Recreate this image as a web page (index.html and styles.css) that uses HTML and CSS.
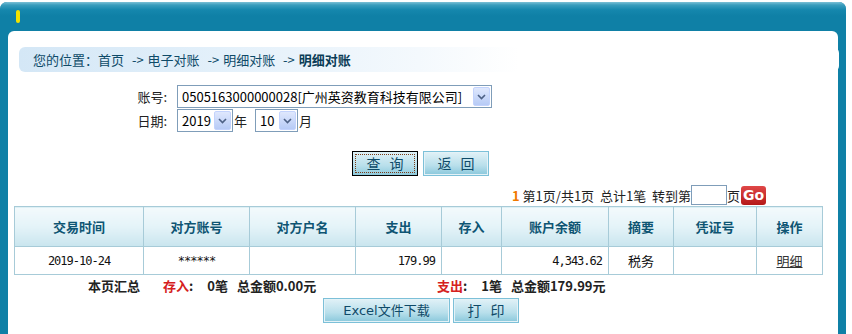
FILE: index.html
```html
<!DOCTYPE html>
<html lang="zh-CN">
<head>
  <meta charset="UTF-8" />
  <title>明细对账</title>
  <link rel="stylesheet" href="styles.css">
</head>
<body>
  <div class="frame">
    <div class="frame-head"><span class="mark"></span></div>
    <div class="panel">

      <div class="crumb">您的位置：首页 <span class="arr">-&gt;</span> 电子对账 <span class="arr">-&gt;</span> 明细对账 <span class="arr">-&gt;</span> <b>明细对账</b></div>

      <div class="form">
        <div class="row">
          <span class="label">账号:</span>
          <span class="combo combo-acct"><span class="val">0505163000000028[广州英资教育科技有限公司]</span><span class="drop"><svg width="9" height="6" viewBox="0 0 9 6"><path d="M1 1 L4.5 4.5 L8 1" fill="none" stroke="#4d6185" stroke-width="1.6"/></svg></span></span>
        </div>
        <div class="row">
          <span class="label">日期:</span>
          <span class="combo combo-year"><span class="val">2019</span><span class="drop"><svg width="9" height="6" viewBox="0 0 9 6"><path d="M1 1 L4.5 4.5 L8 1" fill="none" stroke="#4d6185" stroke-width="1.6"/></svg></span></span>
          <span class="unit">年</span>
          <span class="combo combo-month"><span class="val">10</span><span class="drop"><svg width="9" height="6" viewBox="0 0 9 6"><path d="M1 1 L4.5 4.5 L8 1" fill="none" stroke="#4d6185" stroke-width="1.6"/></svg></span></span>
          <span class="unit">月</span>
        </div>
      </div>

      <div class="actions">
        <button class="btn btn-focus"><span>查 询</span></button>
        <button class="btn">返 回</button>
      </div>

      <div class="pager"><span class="cur">1</span> 第1页/共1页  总计1笔  转到第<span class="goto"></span>页<span class="go">Go</span></div>

      <table class="grid">
        <thead>
          <tr>
            <th class="c1">交易时间</th>
            <th class="c2">对方账号</th>
            <th class="c3">对方户名</th>
            <th class="c4">支出</th>
            <th class="c5">存入</th>
            <th class="c6">账户余额</th>
            <th class="c7">摘要</th>
            <th class="c8">凭证号</th>
            <th class="c9">操作</th>
          </tr>
        </thead>
        <tbody>
          <tr>
            <td class="mid">2019-10-24</td>
            <td class="mid">******</td>
            <td></td>
            <td class="num">179.99</td>
            <td></td>
            <td class="num">4,343.62</td>
            <td class="mid cn">税务</td>
            <td></td>
            <td class="mid cn"><a href="#">明细</a></td>
          </tr>
        </tbody>
      </table>

      <div class="summary">
        <span class="sum-title">本页汇总</span>
        <span class="sum-in"><span class="tag">存入</span>:<span class="cnt">0笔</span>总金额0.00元</span>
        <span class="sum-out"><span class="tag">支出</span>:<span class="cnt">1笔</span>总金额179.99元</span>
      </div>

      <div class="actions actions-bottom">
        <button class="btn btn-excel">Excel文件下载</button>
        <button class="btn">打 印</button>
      </div>

    </div>
  </div>
</body>
</html>
```

FILE: styles.css
```css
body {
  margin: 0;
  padding: 0;
  background: #fff;
  font-family: "Noto Sans CJK SC", "DejaVu Sans", sans-serif;
  font-size: 13px;
  color: #000;
  overflow: hidden;
}
.frame {
  margin-top: 2px;
  width: 846px;
  height: 332px;
  background: #0f80a6;
  border-radius: 7px 7px 0 0;
  display: flex;
  flex-direction: column;
}
.frame-head {
  height: 29px;
  border-radius: 7px 7px 0 0;
  background: linear-gradient(#7cc0d6 0, #3a9dbd 3px, #1587ad 8px, #0f80a6 14px);
  padding: 8px 0 0 16px;
  box-sizing: border-box;
}
.mark {
  display: block;
  width: 4px;
  height: 13px;
  border-radius: 2px;
  background: #f2e200;
}
.panel {
  flex: 1;
  margin: 0 8px;
  background: #fff;
  border-radius: 6px 6px 0 0;
  padding-top: 16px;
}
.crumb {
  margin-left: 11px;
  width: 820px;
  height: 25px;
  line-height: 25px;
  padding-left: 14px;
  box-sizing: border-box;
  border-radius: 6px;
  background: linear-gradient(to right, #d4e7f6 0, #e3f0fa 200px, #f4f9fd 400px, #fff 500px);
  color: #0e4a68;
  font-size: 13px;
  white-space: nowrap;
}
.crumb .arr {
  color: #0e4a68;
  margin: 0 1px 0 5px;
}
.crumb b {
  color: #0b3d57;
}
.form {
  margin-top: 13px;
  display: flex;
  flex-direction: column;
  gap: 1px;
}
.row {
  display: flex;
  align-items: center;
  height: 23px;
}
.label {
  width: 169px;
  text-align: right;
  padding-right: 10px;
  box-sizing: border-box;
  color: #222;
}
.combo {
  display: flex;
  align-items: stretch;
  height: 23px;
  box-sizing: border-box;
  border: 1px solid #7f9db9;
  background: #fff;
  padding: 1px;
}
.combo .val {
  flex: 1;
  padding-left: 3px;
  line-height: 19px;
  color: #000;
  white-space: nowrap;
  overflow: hidden;
}
.combo .drop {
  width: 17px;
  display: flex;
  align-items: center;
  justify-content: center;
  border-radius: 2px;
  background: linear-gradient(#dfe8fd, #b7cbf6);
  border: 1px solid #c3d3fd;
  box-sizing: border-box;
}
.combo-acct { width: 315px; }
.combo-year { width: 56px; }
.combo-month { width: 43px; }
.unit {
  margin: 0 8px 0 1px;
  color: #222;
}
.actions {
  margin-top: 19px;
  display: flex;
  gap: 5px;
  padding-left: 344px;
}
.btn {
  width: 66px;
  height: 25px;
  box-sizing: border-box;
  border: 2px solid #e4f2f7;
  outline: 1px solid #7cc0d8;
  outline-offset: -1px;
  background: linear-gradient(#def0f6, #b8dfeb 60%, #8ecadd);
  color: #0e4a68;
  font-family: "Noto Sans CJK SC", sans-serif;
  font-size: 14px;
  line-height: 19px;
  letter-spacing: 3px;
  text-indent: 3px;
  white-space: nowrap;
  padding: 0;
  cursor: pointer;
}
.btn-focus {
  border: 1px solid #000;
  outline: none;
  padding: 2px;
}
.btn-focus span {
  display: block;
  height: 100%;
  border: 1px dotted #7a3c18;
  box-sizing: border-box;
  line-height: 17px;
}
.pager {
  margin-top: 9px;
  padding-left: 504px;
  height: 20px;
  display: flex;
  align-items: center;
  color: #222;
  white-space: pre;
}
.pager .cur {
  color: #f07800;
  font-weight: bold;
}
.goto {
  display: inline-block;
  width: 36px;
  height: 20px;
  box-sizing: border-box;
  border: 1px solid #7f9db9;
  background: #fff;
}
.go {
  display: inline-block;
  width: 25px;
  height: 19px;
  line-height: 19px;
  border-radius: 3px;
  background: linear-gradient(#e04848, #b51818);
  color: #fff;
  font-family: "DejaVu Sans", sans-serif;
  font-weight: bold;
  font-size: 14px;
  text-align: center;
  margin-left: 1px;
}
.grid {
  margin: 1px 0 0 6px;
  width: 808px;
  border-collapse: collapse;
  table-layout: fixed;
}
.grid th, .grid td {
  border: 1px solid #a7cbd8;
  padding: 0 4px;
  box-sizing: border-box;
}
.grid th {
  height: 40px;
  background: linear-gradient(#f3fafc, #e4f3f8 50%, #c9e5ee);
  color: #0e5573;
  font-weight: bold;
  font-size: 13px;
}
.grid td {
  height: 28px;
  font-family: "DejaVu Sans Mono", "Liberation Mono", monospace;
  font-size: 12px;
  letter-spacing: -1px;
  color: #111;
}
.grid td.mid { text-align: center; }
.grid td.num { text-align: right; padding-right: 6px; }
.grid td.cn {
  font-family: "Noto Sans CJK SC", sans-serif;
  font-size: 13px;
  letter-spacing: 0;
}
.grid td a {
  color: #333;
}
.c1 { width: 129px; }
.c2 { width: 106px; }
.c3 { width: 106px; }
.c4 { width: 86px; }
.c5 { width: 60px; }
.c6 { width: 107px; }
.c7 { width: 65px; }
.c8 { width: 83px; }
.c9 { width: 66px; }
.summary {
  display: flex;
  height: 20px;
  align-items: center;
  font-weight: bold;
  color: #222;
  font-size: 13px;
}
.sum-title { margin-left: 80px; width: 75px; }
.sum-in { width: 274px; }
.cnt {
  margin: 0 9px 0 14px;
}
.tag {
  color: #d52020;
}
.actions-bottom {
  margin-top: 3px;
  padding-left: 315px;
  gap: 3px;
}
.btn-excel {
  width: 127px;
  letter-spacing: 0;
  text-indent: 0;
  font-size: 13px;
  font-family: "DejaVu Sans", "Noto Sans CJK SC", sans-serif;
}
```
